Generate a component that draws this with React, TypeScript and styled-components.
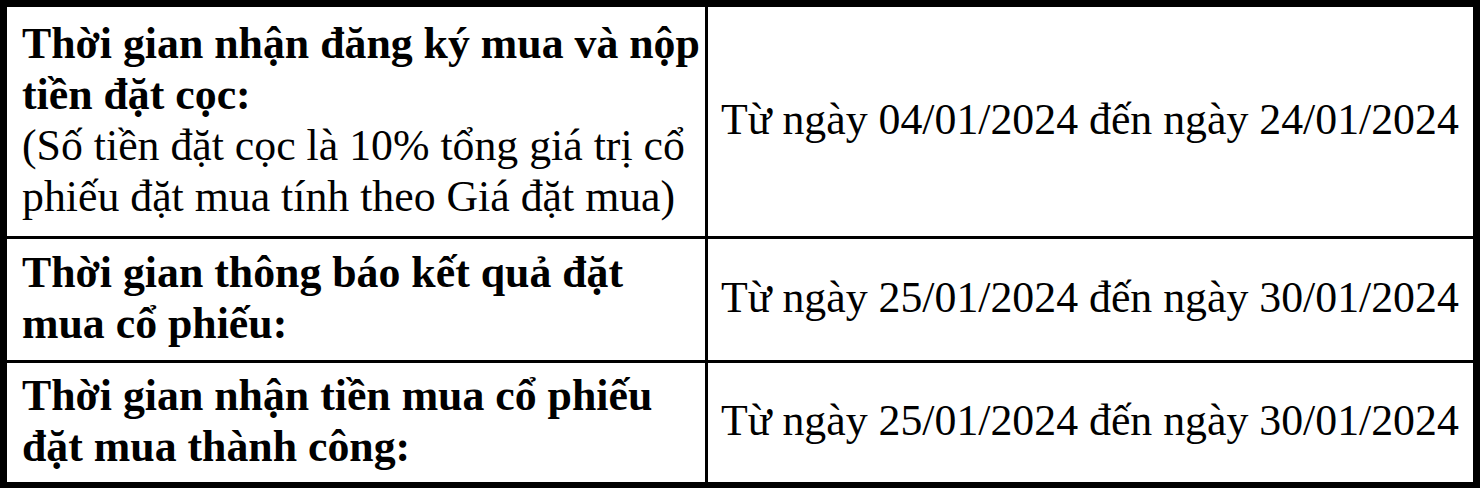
import React from 'react'
import styled, { createGlobalStyle } from 'styled-components'

const GlobalStyle = createGlobalStyle`
  html, body {
    margin: 0;
    padding: 0;
    background: #ffffff;
  }
  body {
    font-family: "Liberation Serif", "Times New Roman", serif;
    color: #000000;
  }
`

interface Row {
  label: string
  note?: string
  period: string
  height: number
}

const rows: Row[] = [
  {
    label: 'Thời gian nhận đăng ký mua và nộp tiền đặt cọc:',
    note: '(Số tiền đặt cọc là 10% tổng giá trị cổ phiếu đặt mua tính theo Giá đặt mua)',
    period: 'Từ ngày 04/01/2024 đến ngày 24/01/2024',
    height: 229,
  },
  {
    label: 'Thời gian thông báo kết quả đặt mua cổ phiếu:',
    period: 'Từ ngày 25/01/2024 đến ngày 30/01/2024',
    height: 121,
  },
  {
    label: 'Thời gian nhận tiền mua cổ phiếu đặt mua thành công:',
    period: 'Từ ngày 25/01/2024 đến ngày 30/01/2024',
    height: 119,
  },
]

export default function App() {
  return (
    <>
      <GlobalStyle />
      <Table rows={rows.map((r) => `${r.height}px`).join(' ')}>
        {rows.map((row) => (
          <React.Fragment key={row.label}>
            <LabelCell>
              <Label>{row.label}</Label>
              {row.note && <Note>{row.note}</Note>}
            </LabelCell>
            <PeriodCell>{row.period}</PeriodCell>
          </React.Fragment>
        ))}
      </Table>
    </>
  )
}

const Table = styled.div<{ rows: string }>`
  display: grid;
  grid-template-columns: 698px 765px;
  grid-template-rows: ${(p) => p.rows};
  gap: 3px;
  width: max-content;
  background: #000000;
  border: 7px solid #000000;
  border-bottom-width: 6px;
  font-size: 43.8px;
  line-height: 51px;
`

const Cell = styled.div`
  background: #ffffff;
  display: flex;
  flex-direction: column;
  justify-content: center;
  box-sizing: border-box;
`

const LabelCell = styled(Cell)`
  padding: 2px 0 6px 15px;
`

const PeriodCell = styled(Cell)`
  padding: 0 6px 4px 13px;
  white-space: nowrap;
`

const Label = styled.div`
  font-weight: bold;
`

const Note = styled.div`
  font-weight: normal;
`
